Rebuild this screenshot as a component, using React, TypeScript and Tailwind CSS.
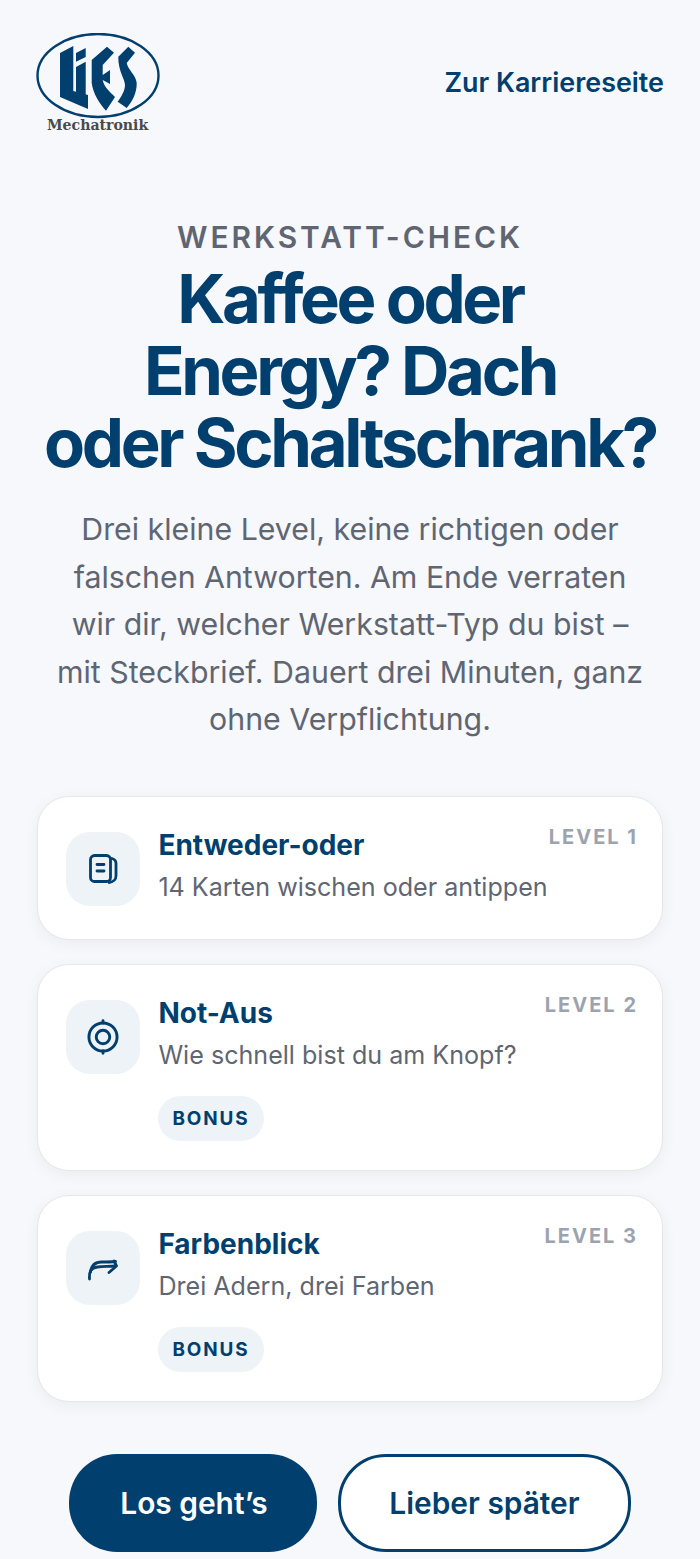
import { ReactNode } from "react";

function Logo() {
  return (
    <div className="relative h-[104px] w-[124px] shrink-0">
      <svg viewBox="0 0 124 90" className="h-[90px] w-[124px]" aria-hidden="true">
        <ellipse cx="62" cy="42.5" rx="60.5" ry="41.5" fill="none" stroke="#003f6e" strokeWidth="2.4" />
        {/* L */}
        <path fill="#003f6e" d="M24 20 37.3 13 V58 L52 62 V76 L24 64 Z" />
        {/* I */}
        <path fill="#003f6e" d="M40 20 L49.7 15 V24 L40 28.7 Z M40 34 L49.7 28.7 V69 L40 58.7 Z" />
        {/* E */}
        <path fill="#003f6e" d="M55.7 27 L71 13.7 78 19.7 L66.7 32 V42 L74 37 V51 L66.7 47 C68 54 74 59 79 64 L70 77.7 C63 70 57 60 55.7 50 Z" />
        {/* S */}
        <path fill="#003f6e" d="M82.3 23.7 L92.3 13.7 99 19.7 L90.7 30 C92 37 100 42 100.7 50 C101 60 96 69 90.7 75 L81.7 68.7 C85 64 89 58 89 52 C89 46 82 38 82.3 23.7 Z" />
      </svg>
      <span className="absolute left-[11px] top-[84px] text-[14.1px] leading-[16px] font-bold text-[#4a4a4a] [font-family:'DejaVu_Serif',serif]">
        Mechatronik
      </span>
    </div>
  );
}

function CardsIcon() {
  return (
    <svg viewBox="0 0 32 32" className="h-8 w-8" fill="none" stroke="#003f6e" strokeWidth="2.8" strokeLinecap="round" strokeLinejoin="round" aria-hidden="true">
      <rect x="3.5" y="2.5" width="20" height="26" rx="4" />
      <path d="M10 11.5h7M10 18h7" />
      <path d="M25 5.5c3 .8 4 2.5 4 5v12c0 4-1.5 6-7 7" />
    </svg>
  );
}

function TargetIcon() {
  return (
    <svg viewBox="0 0 32 32" className="h-[36px] w-[36px]" fill="none" stroke="#003f6e" strokeWidth="2.6" strokeLinecap="round" aria-hidden="true">
      <circle cx="16" cy="16" r="12.5" />
      <circle cx="16" cy="16" r="6" />
      <path d="M16 1.5v2M16 28.5v2" />
    </svg>
  );
}

function WireIcon() {
  return (
    <svg viewBox="0 0 32 32" className="h-8 w-8" fill="none" stroke="#003f6e" strokeWidth="2.8" strokeLinecap="round" strokeLinejoin="round" aria-hidden="true">
      <path d="M2.5 27c-.5-7 1-11 8-12 6-.8 12-.3 18-1" />
      <path d="M3.5 20c1-7 5-10 11-10 4 0 9 0 14-.5" />
      <path d="M22 20.5l7.5-6.5-2.5-5" />
    </svg>
  );
}

function LevelCard({
  icon,
  title,
  text,
  level,
  bonus,
}: {
  icon: ReactNode;
  title: string;
  text: string;
  level: string;
  bonus?: boolean;
}) {
  return (
    <div className="flex gap-[18.4px] rounded-[32px] border border-[#e5e7eb] bg-white pt-[35px] pr-[24px] pb-[33px] pl-[28px] shadow-[0_4px_16px_rgba(0,0,0,0.05)]">
      <div className="flex h-[74px] w-[74px] shrink-0 items-center justify-center rounded-[24px] bg-[#eef3f8]">
        {icon}
      </div>
      <div className="min-w-0 flex-1">
        <div className="flex items-start justify-between">
          <h2 className="-mt-[1px] mb-[1px] text-[28px] leading-[28px] font-bold text-[#003f6e]">{title}</h2>
          <span className="text-[20px] leading-[10px] font-bold tracking-[0.1em] text-[#9ca3af]">{level}</span>
        </div>
        <p className="mt-[12px] -translate-y-[1px] text-[25.1px] leading-[32px] text-[#5f6672]">{text}</p>
        {bonus && (
          <span className="mt-[24px] mb-[-4px] block w-fit rounded-full bg-[#eef3f8] px-[14px] py-[10px] text-[18.9px] leading-[25px] font-bold tracking-[0.1em] text-[#003f6e]">
            BONUS
          </span>
        )}
      </div>
    </div>
  );
}

export default function App() {
  return (
    <div className="min-h-[1559px] overflow-hidden bg-[#f6f8fc] font-['Inter',sans-serif]">
      <header className="flex items-center justify-between px-[36px] pt-[33px]">
        <Logo />
        <a className="mb-[6px] text-[26.9px] leading-[32px] font-semibold text-[#003f6e]">Zur Karriereseite</a>
      </header>

      <section className="mt-[80px] px-[36px] text-center">
        <p className="text-[29.87px] leading-[40px] font-semibold tracking-[0.1em] text-[#5f6672]">WERKSTATT-CHECK</p>
        <h1 className="mt-[6px] text-[67px] leading-[72px] font-bold tracking-[-0.05em] whitespace-nowrap text-[#003f6e]">
          Kaffee oder
          <br />
          Energy? Dach
          <br />
          oder Schaltschrank?
        </h1>
        <p className="mt-[27px] text-[30.3px] leading-[47.6px] text-[#5f6672]">
          Drei kleine Level, keine richtigen oder
          <br />
          falschen Antworten. Am Ende verraten
          <br />
          wir dir, welcher Werkstatt-Typ du bist –
          <br />
          mit Steckbrief. Dauert drei Minuten, ganz
          <br />
          ohne Verpflichtung.
        </p>
      </section>

      <section className="mt-[51.6px] flex flex-col gap-[24.4px] px-[37px]">
        <LevelCard icon={<CardsIcon />} title="Entweder-oder" text="14 Karten wischen oder antippen" level="LEVEL 1" />
        <LevelCard icon={<TargetIcon />} title="Not-Aus" text="Wie schnell bist du am Knopf?" level="LEVEL 2" bonus />
        <LevelCard icon={<WireIcon />} title="Farbenblick" text="Drei Adern, drei Farben" level="LEVEL 3" bonus />
      </section>

      <div className="mt-[52px] flex justify-center gap-[21px]">
        <button className="h-[98px] w-[248px] rounded-[48px] bg-[#003f6e] pl-[2px] text-[29.87px] font-semibold text-white">Los geht’s</button>
        <button className="h-[98px] w-[293px] rounded-[48px] border-[3px] border-[#003f6e] bg-white text-[29.87px] font-semibold text-[#003f6e]">Lieber später</button>
      </div>
    </div>
  );
}
